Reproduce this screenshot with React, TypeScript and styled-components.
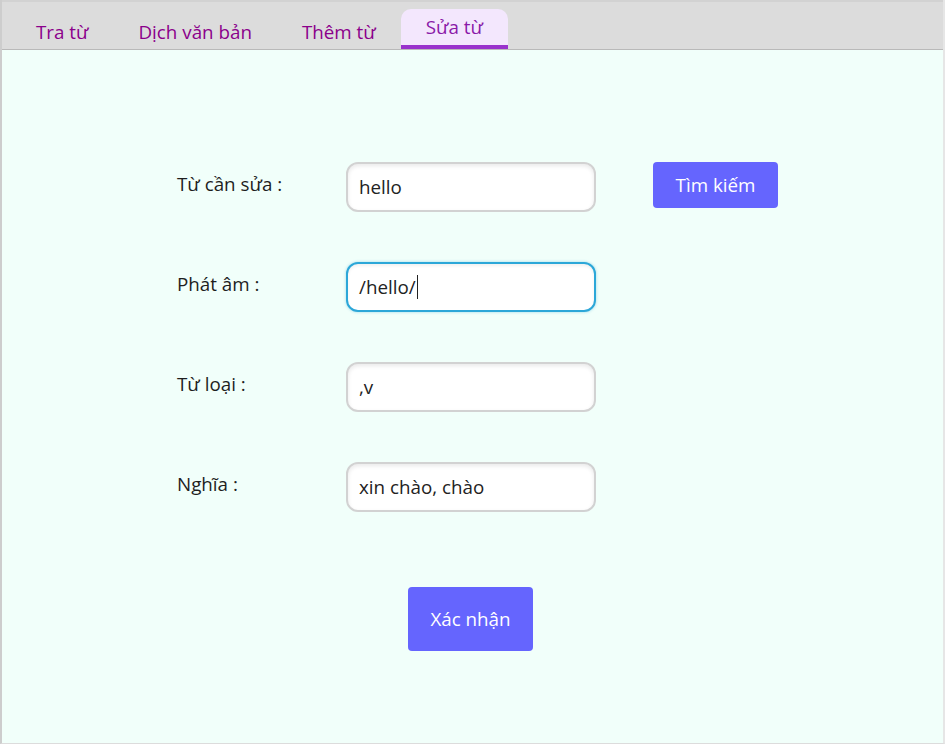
import styled, { createGlobalStyle } from 'styled-components';

const GlobalStyle = createGlobalStyle`
  html, body {
    margin: 0;
    padding: 0;
    background: #f1fffa;
  }
  * {
    box-sizing: border-box;
  }
`;

const Frame = styled.div`
  display: flex;
  flex-direction: column;
  width: 945px;
  height: 744px;
  border-left: 2px solid #cdcdcd;
  border-right: 2px solid #e6e6e6;
  border-bottom: 1px solid #dcdcdc;
  background: #f1fffa;
  font-family: "Open Sans", "Noto Sans", sans-serif;
`;

const TabBar = styled.div`
  display: flex;
  align-items: flex-end;
  height: 50px;
  padding-left: 9px;
  background: #dcdcdc;
  border-top: 2px solid #d2d2d2;
  border-bottom: 1px solid #b9b9b9;
`;

const Tab = styled.div<{ $active?: boolean }>`
  display: flex;
  align-items: center;
  height: 40px;
  padding: ${p => (p.$active ? '0 25px' : '10px 25px 0')};
  font-size: 18.8px;
  color: ${p => (p.$active ? '#8a1aa8' : '#8b008b')};
  background: ${p => (p.$active ? '#f3e7fd' : 'transparent')};
  border-radius: 10px 10px 0 0;
  border-bottom: 4px solid ${p => (p.$active ? '#9932cc' : 'transparent')};
  cursor: pointer;
`;

const Content = styled.div`
  flex: 1;
  display: flex;
  flex-direction: column;
  padding: 112px 0 0 175px;
`;

const Form = styled.div`
  display: grid;
  grid-template-columns: 169px 250px auto;
  row-gap: 50px;
  align-items: start;
`;

const Label = styled.div`
  font-size: 18.8px;
  line-height: 44px;
  color: #1e1e1e;
`;

const Field = styled.div<{ $focused?: boolean }>`
  display: flex;
  align-items: center;
  height: 50px;
  padding-left: 11px;
  font-size: 18.8px;
  color: #222;
  background: #fff;
  border-radius: 12px;
  border: 2px solid ${p => (p.$focused ? '#2ca7d8' : '#d2d2d2')};
  box-shadow: ${p =>
    p.$focused
      ? '0 0 3px rgba(44, 167, 216, 0.45), inset 0 2px 3px rgba(0, 0, 0, 0.06)'
      : 'inset 0 2px 4px rgba(0, 0, 0, 0.09)'};
`;

const Caret = styled.span`
  display: inline-block;
  width: 1px;
  height: 24px;
  margin-left: 1px;
  background: #222;
`;

const Button = styled.button<{ $tall?: boolean }>`
  width: 125px;
  height: ${p => (p.$tall ? '64px' : '46px')};
  margin: ${p => (p.$tall ? '0' : '0 0 0 57px')};
  border: none;
  border-radius: 4px;
  background: #6565fe;
  color: #fff;
  font-family: inherit;
  font-size: 18.8px;
  cursor: pointer;
`;

const Footer = styled.div`
  display: flex;
  justify-content: center;
  width: 481px;
  margin-top: 75px;
  margin-left: 53px;
`;

const tabs = ['Tra từ', 'Dịch văn bản', 'Thêm từ', 'Sửa từ'];

function App() {
  return (
    <Frame>
      <GlobalStyle />
      <TabBar>
        {tabs.map(t => (
          <Tab key={t} $active={t === 'Sửa từ'}>
            {t}
          </Tab>
        ))}
      </TabBar>
      <Content>
        <Form>
          <Label>Từ cần sửa :</Label>
          <Field>hello</Field>
          <Button>Tìm kiếm</Button>

          <Label>Phát âm :</Label>
          <Field $focused>
            /hello/
            <Caret />
          </Field>
          <div />

          <Label>Từ loại :</Label>
          <Field>,v</Field>
          <div />

          <Label>Nghĩa :</Label>
          <Field>xin chào, chào</Field>
          <div />
        </Form>
        <Footer>
          <Button $tall>Xác nhận</Button>
        </Footer>
      </Content>
    </Frame>
  );
}

export default App;
